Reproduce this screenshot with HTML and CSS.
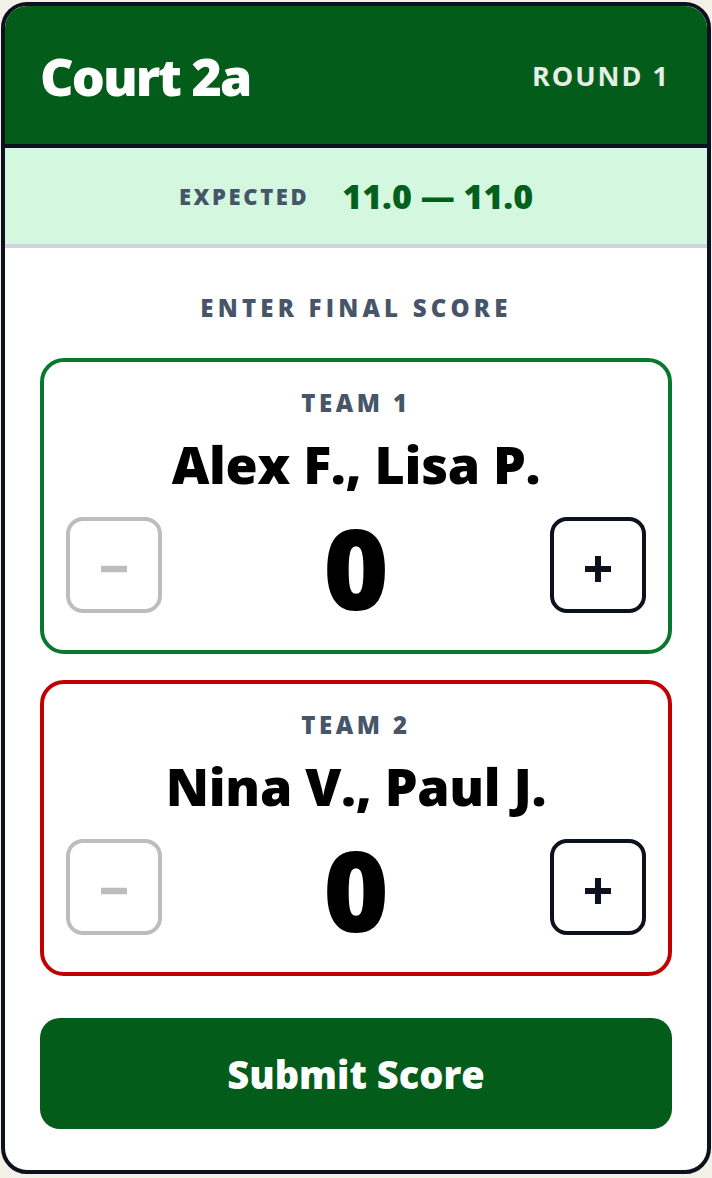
FILE: index.html
```html
<!DOCTYPE html>
<html lang="en">
<head>
<meta charset="utf-8">
<title>Court 2a</title>
<meta name="viewport" content="width=device-width, initial-scale=1">
<link rel="stylesheet" href="styles.css">
</head>
<body>

<div class="card">
	<header class="top">
		<h1>Court 2a</h1>
		<span class="round">ROUND 1</span>
	</header>

	<div class="expected">
		<span class="expected-label">EXPECTED</span>
		<span class="expected-value">11.0 — 11.0</span>
	</div><!-- expected -->

	<main class="score-entry">
		<h2>ENTER FINAL SCORE</h2>

		<div class="team team-1">
			<div class="team-label">TEAM 1</div>
			<div class="team-names">Alex F., Lisa P.</div>
			<div class="counter">
				<button class="btn-step" disabled aria-label="minus">
					<svg width="26" height="26" viewBox="0 0 26 26"><path d="M0 13h26" stroke="currentColor" stroke-width="6.5"/></svg>
				</button>
				<span class="points">0</span>
				<button class="btn-step" aria-label="plus">
					<svg width="26" height="26" viewBox="0 0 26 26"><path d="M13 0v26M0 13h26" stroke="currentColor" stroke-width="6"/></svg>
				</button>
			</div>
		</div><!-- team -->

		<div class="team team-2">
			<div class="team-label">TEAM 2</div>
			<div class="team-names">Nina V., Paul J.</div>
			<div class="counter">
				<button class="btn-step" disabled aria-label="minus">
					<svg width="26" height="26" viewBox="0 0 26 26"><path d="M0 13h26" stroke="currentColor" stroke-width="6.5"/></svg>
				</button>
				<span class="points">0</span>
				<button class="btn-step" aria-label="plus">
					<svg width="26" height="26" viewBox="0 0 26 26"><path d="M13 0v26M0 13h26" stroke="currentColor" stroke-width="6"/></svg>
				</button>
			</div>
		</div><!-- team -->

		<button class="submit">Submit Score</button>
	</main>
</div><!-- card -->

</body>
</html>
```

FILE: styles.css
```css
body {
	margin: 0;
	padding: 2px 1px;
	background: #f3f0e8;
	font-family: "Open Sans", "Noto Sans", sans-serif;
}

.card {
	box-sizing: border-box;
	height: 1172px;
	border: 4px solid #0c111d;
	border-radius: 26px;
	overflow: hidden;
	background: #fff;
	display: flex;
	flex-direction: column;
}

.top {
	display: flex;
	justify-content: space-between;
	align-items: center;
	height: 138px;
	padding: 0 37px 0 35px;
	background: #035c1a;
	border-bottom: 4px solid #0c111d;
}

	.top h1 {
		margin: 0;
		color: #fff;
		font-size: 52px;
		font-weight: 800;
		letter-spacing: -2px;
		line-height: 64px;
		padding-top: 2px;
	}

	.top .round {
		color: #e6efe6;
		font-size: 27px;
		font-weight: 700;
		letter-spacing: 2px;
	}

.expected {
	display: flex;
	justify-content: center;
	align-items: center;
	gap: 33px;
	height: 96px;
	background: #d4f7e0;
	border-bottom: 4px solid #d1d5db;
}

	.expected-label {
		color: #475569;
		font-size: 22px;
		font-weight: 800;
		letter-spacing: 2.6px;
	}

	.expected-value {
		color: #03601c;
		font-size: 34px;
		font-weight: 800;
	}

.score-entry {
	display: flex;
	flex-direction: column;
	padding: 0 35px;
}

	.score-entry h2 {
		margin: 44px 0 34px;
		text-align: center;
		color: #475569;
		font-size: 24px;
		font-weight: 800;
		letter-spacing: 4.2px;
		line-height: 32px;
	}

.team {
	border: 4px solid #08782f;
	border-radius: 24px;
	padding: 25px 22px 35px;
	text-align: center;
}

.team-2 {
	margin-top: 26px;
	border-color: #c00000;
}

	.team-label {
		color: #475569;
		font-size: 24px;
		font-weight: 800;
		letter-spacing: 3.5px;
		line-height: 32px;
	}

	.team-names {
		margin-top: 13px;
		color: #000;
		font-size: 52px;
		font-weight: 800;
		line-height: 64px;
		letter-spacing: -0.3px;
	}

.counter {
	display: flex;
	justify-content: space-between;
	align-items: flex-start;
	margin-top: 21px;
}

	.points {
		margin-top: 2px;
		font-size: 112px;
		font-weight: 800;
		line-height: 96px;
		color: #000;
	}

.btn-step {
	box-sizing: border-box;
	display: flex;
	justify-content: center;
	align-items: center;
	width: 96px;
	height: 96px;
	padding: 8px 0 0;
	border: 4px solid #0c111d;
	border-radius: 17px;
	background: #fff;
	color: #0c111d;
}

	.btn-step:disabled {
		border-color: #bdbdbd;
		color: #bdbdbd;
	}

.submit {
	margin-top: 42px;
	height: 111px;
	border: none;
	border-radius: 20px;
	background: #035c1a;
	color: #fff;
	font-family: "Open Sans", sans-serif;
	font-size: 38px;
	font-weight: 800;
}
```
